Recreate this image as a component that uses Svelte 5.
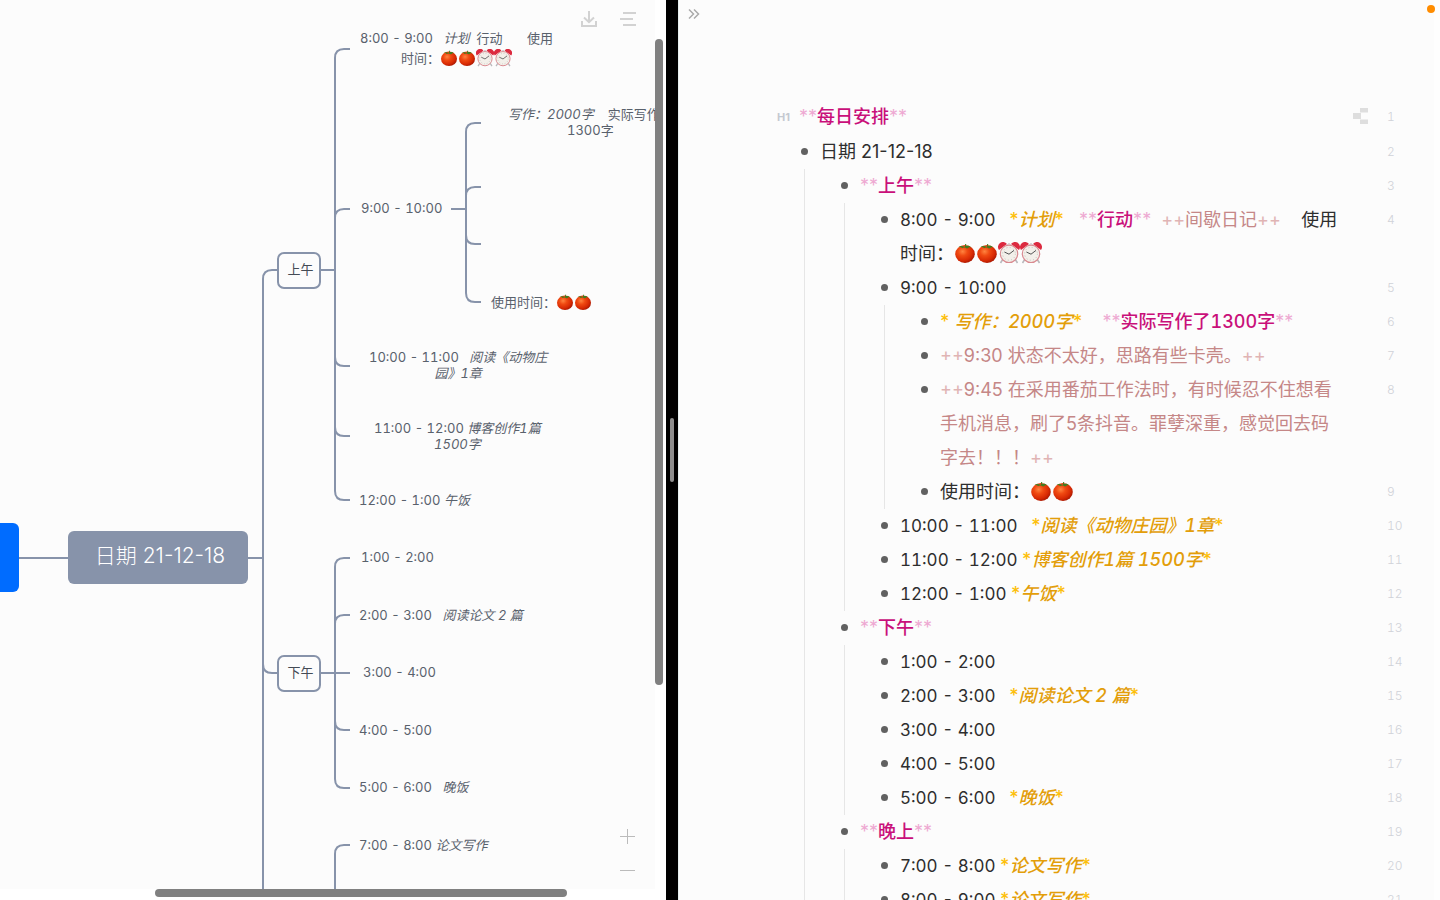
<script>
  const plain = (t) => ({ t, k: 'plain' });
  const time = (t) => ({ t, k: 'time' });
  const em = (t) => ({ t, k: 'em', m: '*' });
  const strong = (t) => ({ t, k: 'strong', m: '**' });
  const ins = (t) => ({ t, k: 'ins', m: '++' });
  const tomato = { k: 'tomato' };
  const clock = { k: 'clock' };

  const outline = [
    {
      n: 2, parts: [plain('日期 21-12-18')], children: [
        {
          n: 3, parts: [strong('上午')], children: [
            { n: 4, parts: [time('8:00 - 9:00   '), em('计划'), plain('   '), strong('行动'), plain('  '), ins('间歇日记'), plain('    使用'), plain('时间：'), tomato, tomato, clock, clock] },
            {
              n: 5, parts: [time('9:00 - 10:00')], children: [
                { n: 6, parts: [em(' 写作：2000字'), plain('    '), strong('实际写作了1300字')] },
                { n: 7, parts: [ins('9:30 状态不太好，思路有些卡壳。')] },
                { n: 8, parts: [ins('9:45 在采用番茄工作法时，有时候忍不住想看手机消息，刷了5条抖音。罪孽深重，感觉回去码字去！！！')] },
                { n: 9, parts: [plain('使用时间：'), tomato, tomato] }
              ]
            },
            { n: 10, parts: [time('10:00 - 11:00   '), em('阅读《动物庄园》1章')] },
            { n: 11, parts: [time('11:00 - 12:00 '), em('博客创作1篇 1500字')] },
            { n: 12, parts: [time('12:00 - 1:00 '), em('午饭')] }
          ]
        },
        {
          n: 13, parts: [strong('下午')], children: [
            { n: 14, parts: [time('1:00 - 2:00')] },
            { n: 15, parts: [time('2:00 - 3:00   '), em('阅读论文 2 篇')] },
            { n: 16, parts: [time('3:00 - 4:00')] },
            { n: 17, parts: [time('4:00 - 5:00')] },
            { n: 18, parts: [time('5:00 - 6:00   '), em('晚饭')] }
          ]
        },
        {
          n: 19, parts: [strong('晚上')], children: [
            { n: 20, parts: [time('7:00 - 8:00 '), em('论文写作')] },
            { n: 21, parts: [time('8:00 - 9:00 '), em('论文写作')] }
          ]
        }
      ]
    }
  ];

  const nodes = [
    { x: 360, y: 28, tall: true, lines: [[time('8:00 - 9:00   '), em('计划'), plain('  行动       使用')], [plain('时间：'), tomato, tomato, clock, clock]] },
    { x: 361, y: 200, lines: [[time('9:00 - 10:00')]] },
    { x: 508, y: 106, lines: [[em('写作：2000字'), plain('    实际写作了')], [plain('1300字')]] },
    { x: 491, y: 293, lines: [[plain('使用时间：'), tomato, tomato]] },
    { x: 369, y: 349, lines: [[time('10:00 - 11:00   '), em('阅读《动物庄')], [em('园》1章')]] },
    { x: 374, y: 420, lines: [[time('11:00 - 12:00 '), em('博客创作1篇')], [em('1500字')]] },
    { x: 359, y: 492, lines: [[time('12:00 - 1:00 '), em('午饭')]] },
    { x: 361, y: 549, lines: [[time('1:00 - 2:00')]] },
    { x: 359, y: 607, lines: [[time('2:00 - 3:00   '), em('阅读论文 2 篇')]] },
    { x: 363, y: 664, lines: [[time('3:00 - 4:00')]] },
    { x: 359, y: 722, lines: [[time('4:00 - 5:00')]] },
    { x: 359, y: 779, lines: [[time('5:00 - 6:00   '), em('晚饭')]] },
    { x: 359, y: 837, lines: [[time('7:00 - 8:00 '), em('论文写作')]] }
  ];

  const up = (x, y, end) => `M${end} ${y}H${x + 9}Q${x} ${y} ${x} ${y + 9}`;
  const down = (x, y, end) => `M${end} ${y}H${x + 9}Q${x} ${y} ${x} ${y - 9}`;
  const wires = [
    'M19 558H68M248 558H263', up(263, 270, 277), 'M263 279V900', down(263, 673, 277),
    'M321 270H335', up(335, 49, 350), 'M335 58V491', up(335, 209, 350), down(335, 366, 350), down(335, 436, 350), down(335, 500, 350),
    'M451 209H466', up(466, 123, 481), 'M466 132V293', up(466, 187, 481), down(466, 244, 481), down(466, 302, 481),
    'M321 673H350', up(335, 558, 350), 'M335 567V779', up(335, 615, 350), down(335, 730, 350), down(335, 788, 350),
    up(335, 845, 350), 'M335 854V900'
  ].join('');
</script>

{#snippet glyph(kind)}
  {#if kind === 'tomato'}
    <svg class="emoji" viewBox="0 0 22 22" role="img" aria-label="番茄">
      <ellipse cx="11" cy="12" rx="9.8" ry="8.9" fill="url(#tomato-skin)" />
      <path d="M11 5 C8 3.5 6 3.8 4.6 5 C6.5 5 7.500 5 8 6.200 C9 5.400 10 5.400 11 5.600 C12 6.600 13.500 6.600 14.500 6 C14 5.400 15 5 17 5.200 C15.400 3.400 13 3.600 11.600 4 L12.400 2.200 L11 2Z" fill="#3f7d20" />
    </svg>
  {:else}
    <svg class="emoji" viewBox="0 0 22 22" role="img" aria-label="闹钟">
      <path d="M5 17L2.5 21M17 17L19.5 21" stroke="#b9b9bd" stroke-width="1.6" />
      <path d="M1 8A5 5 0 0 1 9 2ZM21 8A5 5 0 0 0 13 2Z" fill="#dc2a3f" />
      <path d="M9.4 2.6Q11 .6 12.6 2.6" fill="none" stroke="#c2bfc4" />
      <circle cx="11" cy="11.8" r="8.7" fill="#f3f0ea" stroke="#d98a90" stroke-width="1.2" />
      <circle cx="11" cy="11.8" r="6.4" fill="none" stroke="#c4c1bd" stroke-width="1" stroke-dasharray="1 2.35" />
      <path d="M6.4 10L11 12.2L16 8.4" fill="none" stroke="#555" stroke-width="1" />
    </svg>
  {/if}
{/snippet}

{#snippet mapRun(parts)}
  {#each parts as p}{#if !p.t}{@render glyph(p.k)}{:else if p.k === 'em'}<em>{p.t}</em>{:else}<span>{p.t}</span>{/if}{/each}
{/snippet}

{#snippet source(parts)}
  {#each parts as p}{#if !p.t}{@render glyph(p.k)}{:else if p.m}<span class="{p.k}-mark">{p.m}</span><span class={p.k}>{p.t}</span><span class="{p.k}-mark">{p.m}</span>{:else}<span class={p.k}>{p.t}</span>{/if}{/each}
{/snippet}

{#snippet branch(items)}
  <ul class="branch">
    {#each items as item}
      <li>
        <div class="row">
          <span class="bullet"></span>
          <p class="text">{@render source(item.parts)}</p>
          <span class="num">{item.n}</span>
        </div>
        {#if item.children}{@render branch(item.children)}{/if}
      </li>
    {/each}
  </ul>
{/snippet}

<svg class="defs" aria-hidden="true">
  <defs>
    <radialGradient id="tomato-skin" cx="38%" cy="36%" r="68%">
      <stop offset="0" stop-color="#ff8440" />
      <stop offset=".35" stop-color="#f04a12" />
      <stop offset=".75" stop-color="#d82a04" />
      <stop offset="1" stop-color="#a81802" />
    </radialGradient>
  </defs>
</svg>

<main class="app">
  <section class="map" aria-label="思维导图">
    <div class="canvas">
      <svg class="wires" aria-hidden="true"><path d={wires} /></svg>
      <div class="root"></div>
      <div class="topic">日期 21-12-18</div>
      <div class="box morning">上午</div>
      <div class="box noon">下午</div>
      {#each nodes as node}
        <div class="node" class:tall={node.tall} style="left:{node.x}px;top:{node.y}px">
          {#each node.lines as line}<div class="line">{@render mapRun(line)}</div>{/each}
        </div>
      {/each}
      <div class="tools">
        <button aria-label="导出">
          <svg viewBox="0 0 16 16"><path d="M8 0V11M3 6.5L8 11.2L13 6.5M1 10V15H15V10" /></svg>
        </button>
        <button aria-label="菜单">
          <svg viewBox="0 0 16 16"><path d="M3 2H16M0 8H13M3 14H16" /></svg>
        </button>
      </div>
      <div class="zoom">
        <button aria-label="放大"><svg viewBox="0 0 15 15"><path d="M0 7.5H15M7.5 0V15" /></svg></button>
        <button aria-label="缩小"><svg viewBox="0 0 15 15"><path d="M0 7.5H15" /></svg></button>
      </div>
    </div>
    <div class="vbar"><span></span></div>
    <div class="hbar"><span></span></div>
  </section>

  <div class="divider"><span></span></div>

  <section class="editor" aria-label="大纲">
    <button class="expand" aria-label="展开">
      <svg viewBox="0 0 12 10"><path d="M1 .5L5.5 5L1 9.5M6 .5L10.5 5L6 9.5" /></svg>
    </button>
    <span class="status"></span>
    <div class="doc">
      <div class="row heading">
        <span class="level">H1</span>
        <h1 class="text">{@render source([strong('每日安排')])}</h1>
        <svg class="tree" viewBox="0 0 15 16" aria-hidden="true"><path d="M0 5H8V11H0ZM7 0H15V4.5H7ZM7 11.5H15V16H7Z" /></svg>
        <span class="num">1</span>
      </div>
      {@render branch(outline)}
    </div>
  </section>
</main>

<style>
  :global(body) { background: #fff; }
  .app {
    display: grid;
    grid-template-columns: minmax(0, 666fr) 12px minmax(0, 762fr);
    height: 100vh;
    overflow: hidden;
    font-family: Inter, "Noto Sans CJK SC", sans-serif;
  }
  .defs { position: absolute; width: 0; height: 0; }
  button { border: 0; padding: 0; background: none; display: block; cursor: pointer; }
  button svg { display: block; fill: none; }

  .map {
    display: grid;
    grid-template: minmax(0, 1fr) 11px / minmax(0, 1fr) 11px;
    background: #fff;
  }
  .canvas { position: relative; overflow: hidden; background: #fcfcfc; }
  .wires { position: absolute; inset: 0; width: 100%; height: 100%; fill: none; stroke: #8793aa; stroke-width: 2; }
  .root, .topic, .box, .node { position: absolute; }
  .root { left: 0; top: 523px; width: 19px; height: 69px; border-radius: 0 6px 6px 0; background: #006cff; }
  .topic {
    left: 68px; top: 531px; box-sizing: border-box; width: 180px; height: 53px; border-radius: 6px;
    background: #8793aa; color: #fff; font-size: 21px; font-weight: 300; line-height: 50px; text-align: center; padding-left: 4px;
    white-space: nowrap;
  }
  .box {
    left: 277px; box-sizing: border-box; width: 44px; height: 37px; padding-left: 3px;
    border: 2px solid #8793aa; border-radius: 7px; background: #fcfcfc;
    color: #444b55; font-size: 13px; line-height: 31px; text-align: center;
  }
  .morning { top: 252px; }
  .noon { top: 655px; }
  .node {
    color: #59616c; font-size: 13px; font-variant-numeric: tabular-nums;
    line-height: 16px; text-align: center; white-space: pre;
  }
  .line { display: flex; justify-content: center; align-items: center; min-height: 16px; }
  .tall .line { min-height: 20px; }
  .node .emoji { width: 18px; height: 18px; }

  .tools { position: absolute; right: 19px; top: 11px; display: flex; gap: 23px; }
  .tools svg { width: 16px; height: 16px; stroke: #d2d2d2; stroke-width: 2; }
  .zoom { position: absolute; right: 20px; bottom: 11px; display: flex; flex-direction: column; gap: 19px; }
  .zoom svg { width: 15px; height: 15px; stroke: #bbb; stroke-width: 1; }

  .vbar { padding-top: 39px; }
  .vbar span { display: block; width: 8px; height: 76%; border-radius: 4px; background: #808080; }
  .hbar { padding-left: 155px; }
  .hbar span { display: block; width: 82.4%; height: 8px; border-radius: 4px; background: #808080; }

  .divider { display: flex; align-items: center; justify-content: center; background: #000; }
  .divider span { width: 4px; height: 64px; border-radius: 2px; background: #8e8e8e; }

  .editor {
    position: relative; overflow: hidden; background: #fcfcfc;
    border-left: 1px solid #e6f0f0;
    padding: 100px 35px 0 98px;
  }
  .editor::after { content: ''; position: absolute; inset: 0 0 0 auto; width: 6px; background: #fefefe; }
  .expand { position: absolute; left: 9px; top: 9px; }
  .expand svg { width: 12px; height: 10px; stroke: #aaa; stroke-width: 1.5; }
  .status { position: absolute; z-index: 1; right: 5px; top: 5px; width: 8px; height: 8px; border-radius: 50%; background: #ff8c00; }

  .row { display: flex; color: #2e2e2e; font-size: 18px; line-height: 34px; }
  .text { flex: 1; margin: 0; padding-right: 47px; font-size: 18px; font-weight: 400; white-space: pre-wrap; line-break: anywhere; }
  .num { width: 18px; color: #d0d2d8; font-size: 12px; font-weight: 300; font-variant-numeric: tabular-nums; }
  .heading { height: 35px; }
  .level { width: 22px; color: #c5c9d1; font-size: 11px; font-weight: 700; }
  .heading .text { padding-right: 0; }
  .tree { width: 15px; height: 16px; margin: 8px 19px 0 0; fill: #dedede; }

  .branch { list-style: none; margin: 0; padding: 0; }
  .doc > .branch { margin-left: 23px; }
  .branch .branch { margin-left: 4px; padding-left: 35px; border-left: 1px solid #e6e6e6; }
  .bullet { width: 7px; height: 7px; margin: 13px 12px 0 1px; border-radius: 50%; background: #616161; }

  .time { font-size: 17px; font-variant-numeric: tabular-nums; }
  .strong { color: #c9107a; font-weight: 500; font-variant-numeric: tabular-nums; }
  .strong-mark { color: #eea9d2; }
  .em { color: #e39e0a; font-style: italic; font-weight: 500; font-variant-numeric: tabular-nums; }
  .em-mark { color: #fdbf0a; font-weight: 500; }
  .ins { color: #c58787; }
  .ins-mark { color: #e0b4b4; }
  .row .emoji { width: 22px; height: 22px; vertical-align: -4px; }
</style>
